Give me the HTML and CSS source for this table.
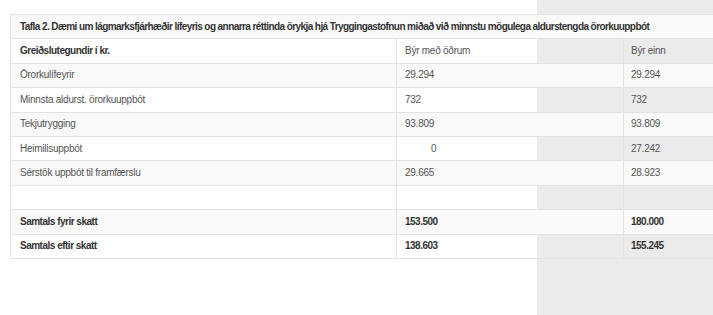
FILE: index.html
```html
<!DOCTYPE html>
<html lang="is">
<head>
<meta charset="utf-8">
<title>Tafla 2</title>
<link rel="stylesheet" href="styles.css">
</head>
<body>
<div class="page">
  <table class="data">
    <colgroup>
      <col class="c1"><col class="c2"><col class="c3">
    </colgroup>
    <tbody>
      <tr class="odd"><td colspan="3" class="b title">Tafla 2. Dæmi um lágmarksfjárhæðir lífeyris og annarra réttinda örykja hjá Tryggingastofnun miðað við minnstu mögulega aldurstengda örorkuuppbót</td></tr>
      <tr><td class="b">Greiðslutegundir í kr.</td><td>Býr með öðrum</td><td>Býr einn</td></tr>
      <tr class="odd"><td>Örorkulífeyrir</td><td>29.294</td><td>29.294</td></tr>
      <tr><td>Minnsta aldurst. örorkuuppbót</td><td>732</td><td>732</td></tr>
      <tr class="odd"><td>Tekjutrygging</td><td>93.809</td><td>93.809</td></tr>
      <tr><td>Heimilisuppbót</td><td><span class="indent">0</span></td><td>27.242</td></tr>
      <tr class="odd"><td>Sérstök uppbót til framfærslu</td><td>29.665</td><td>28.923</td></tr>
      <tr><td>&nbsp;</td><td>&nbsp;</td><td>&nbsp;</td></tr>
      <tr class="odd"><td class="b">Samtals fyrir skatt</td><td class="b">153.500</td><td class="b">180.000</td></tr>
      <tr><td class="b">Samtals eftir skatt</td><td class="b">138.603</td><td class="b">155.245</td></tr>
    </tbody>
  </table>
</div>
</body>
</html>
```
FILE: styles.css
```css
html, body {
  margin: 0;
  padding: 0;
}
body {
  background: #fff;
  overflow: hidden;
}
.page {
  min-height: 315px;
  padding: 14px 0 0 10px;
  box-sizing: border-box;
  background: linear-gradient(to right, #fff 537px, #ebebeb 537px);
  font-family: "Liberation Sans", Arial, sans-serif;
  font-size: 10px;
  color: #555;
}
.data {
  border-collapse: collapse;
  table-layout: fixed;
  width: 703px;
  border: 1px solid #e3e3e3;
  border-right: 0;
}
.c1 { width: 386px; }
.c2 { width: 227px; }
.c3 { width: 90px; }
.data td {
  border: 1px solid #e3e3e3;
  padding: 0 4px 0 9px;
  height: 23.4px;
  line-height: 12px;
  vertical-align: middle;
  white-space: nowrap;
  letter-spacing: -0.25px;
}
.data td:last-child {
  border-right: 0;
  padding-left: 7px;
}
.data td:nth-child(2) {
  padding-left: 8px;
}
.data tr.odd td {
  background: #f9f9f9;
}
.data td.b {
  font-weight: bold;
  color: #333;
  letter-spacing: -0.5px;
}
.data td.title {
  padding-left: 9px;
  letter-spacing: -0.58px;
}
.indent {
  padding-left: 26px;
}
```
